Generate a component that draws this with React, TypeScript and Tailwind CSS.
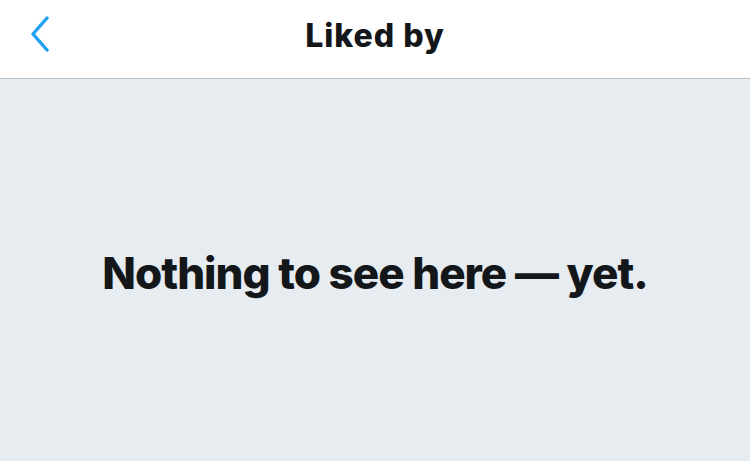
export default function App() {
  return (
    <div
      className="flex h-[461px] w-[750px] flex-col bg-[#e6ecf0]"
      style={{ fontFamily: 'Inter, "Liberation Sans", sans-serif' }}
    >
      <header className="relative flex h-[79px] shrink-0 items-center justify-center border-b border-[#bdc5cc] bg-white">
        <button className="absolute left-[26px] top-[12px] p-1">
          <svg width="20" height="36" viewBox="0 0 20 36" fill="none">
            <path
              d="M17 2 L3 18 L17 34"
              stroke="#1da1f2"
              strokeWidth="3.4"
              strokeLinecap="round"
              strokeLinejoin="round"
            />
          </svg>
        </button>
        <h1 className="mb-[7px] text-[32px] font-extrabold tracking-[1px] text-[#14171a]">Liked by</h1>
      </header>
      <main className="flex flex-1 items-center justify-center pt-[6px]">
        <p className="text-[44px] font-extrabold tracking-[-1px] text-[#14171a]">
          Nothing to see here — yet.
        </p>
      </main>
    </div>
  )
}
